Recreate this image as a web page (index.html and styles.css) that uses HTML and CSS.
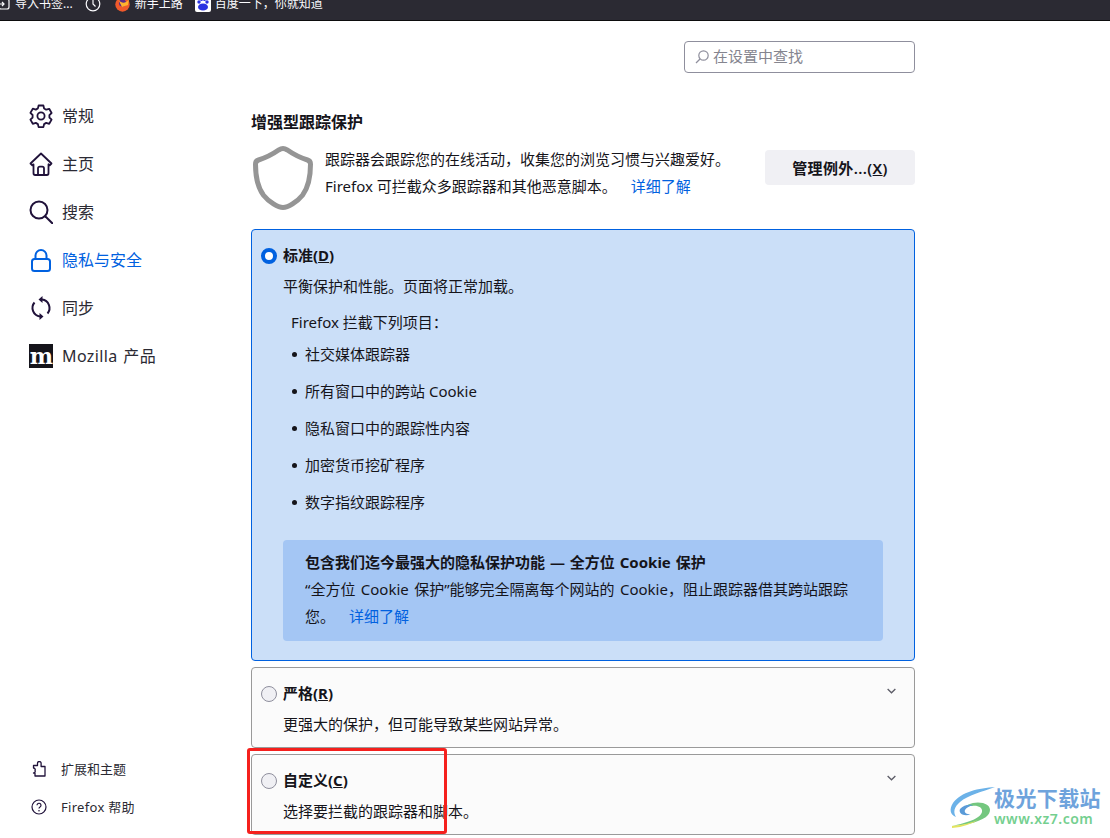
FILE: index.html
```html
<!DOCTYPE html>
<html lang="zh-CN">
<head>
    <meta charset="UTF-8">
    <meta name="viewport" content="width=device-width, initial-scale=1.0">
    <title>设置</title>
    <link rel="stylesheet" href="styles.css">
</head>
<body>
    <div class="bookmarks">
        <div class="bookmark-row">
            <span class="bookmark import">
                <svg width="12" height="12" viewBox="0 0 12 12" fill="none" stroke="#fbfbfe" stroke-width="1.2"><rect x="1" y="1" width="10" height="10" rx="2"/><path d="M0 6h6M4 4l2 2-2 2"/></svg>
                导入书签...
            </span>
            <span class="bookmark clock">
                <svg width="16" height="16" viewBox="0 0 16 16" fill="none" stroke="#fbfbfe" stroke-width="1.2"><circle cx="8" cy="8" r="6.8"/><path d="M8 3.5V8l2.5 2.5"/></svg>
            </span>
            <span class="bookmark guide">
                <svg width="15" height="15" viewBox="0 0 15 15"><circle cx="7.5" cy="7.5" r="7.2" fill="#f0592b"/><circle cx="7.5" cy="6" r="3.6" fill="#5b2a86"/><path d="M3 2c3 5 8 5 11 0l-1 6-6 2z" fill="#ffb22e"/></svg>
                新手上路
            </span>
            <span class="bookmark baidu">
                <svg width="16" height="16" viewBox="0 0 16 16"><rect width="16" height="16" rx="2" fill="#fff"/><circle cx="4" cy="6" r="1.7" fill="#2932e1"/><circle cx="12" cy="6" r="1.7" fill="#2932e1"/><circle cx="6.5" cy="3.5" r="1.5" fill="#2932e1"/><circle cx="9.5" cy="3.5" r="1.5" fill="#2932e1"/><ellipse cx="8" cy="11" rx="5" ry="3.6" fill="#2932e1"/></svg>
                百度一下，你就知道
            </span>
        </div>
    </div>

    <div class="page">
        <nav class="sidebar">
            <ul class="nav-list">
                <li class="nav-item">
                    <svg class="nav-icon" viewBox="0 0 24 24" fill="none" stroke="currentColor" stroke-width="1.8" stroke-linejoin="round"><path d="M9.6 1.5h4.8l.7 3 2.1 1.2 3-.9 2.4 4.2-2.2 2.1v2.4l2.2 2.1-2.4 4.2-3-.9-2.1 1.2-.7 3H9.6l-.7-3-2.1-1.2-3 .9-2.4-4.2 2.2-2.1V11L1.4 8.9l2.4-4.2 3 .9 2.1-1.2z"/><circle cx="12" cy="12" r="3.6"/></svg>
                    常规
                </li>
                <li class="nav-item">
                    <svg class="nav-icon" viewBox="0 0 24 24" fill="none" stroke="currentColor" stroke-width="1.8" stroke-linejoin="round"><path d="M1.5 11.5 12 1.5l10.5 10-1.8 1.8-1.2-1v9c0 .9-.6 1.7-1.6 1.7H6.1c-1 0-1.6-.8-1.6-1.7v-9l-1.2 1z"/><path d="M9 23v-6.500c0-1 .8-1.8 1.800-1.800h2.400c1 0 1.800.8 1.800 1.800V23"/></svg>
                    主页
                </li>
                <li class="nav-item">
                    <svg class="nav-icon" viewBox="0 0 24 24" fill="none" stroke="currentColor" stroke-width="2" stroke-linecap="round"><circle cx="10" cy="10" r="8.5"/><path d="m16.5 16.5 7 7"/></svg>
                    搜索
                </li>
                <li class="nav-item active">
                    <svg class="nav-icon" viewBox="0 0 24 24" fill="none" stroke="currentColor" stroke-width="2"><rect x="3" y="11" width="18" height="12" rx="2.5"/><path d="M6.5 11V7.5a5.500 5.500 0 0 1 11 0V11"/></svg>
                    隐私与安全
                </li>
                <li class="nav-item">
                    <svg class="nav-icon" viewBox="0 0 24 24" fill="none" stroke="currentColor" stroke-width="2"><path d="M13 3.600A8.500 8.500 0 0 1 18.500 17.500"/><path d="M11 20.400A8.500 8.500 0 0 1 5.500 6.500"/><path d="M13.500 0v7L9.500 3.500zM10.500 17v7l4-3.500z" fill="currentColor" stroke="none"/></svg>
                    同步
                </li>
                <li class="nav-item">
                    <span class="moz-logo">m</span>
                    <span class="moz-name">Mozilla 产品</span>
                </li>
            </ul>
            <ul class="nav-footer">
                <li class="foot-item">
                    <svg class="foot-icon" viewBox="0 0 16 16" fill="none" stroke="currentColor" stroke-width="1.3" stroke-linejoin="round"><path d="M2.500 4.500H6.500V2.300a1.800 1.800 0 0 1 3.600 0V5.500H14V15H4V12H2.500a1.700 1.700 0 0 0 1.500-2.500 1.700 1.700 0 0 0-1.500-2.500z"/></svg>
                    扩展和主题
                </li>
                <li class="foot-item">
                    <svg class="foot-icon" viewBox="0 0 16 16" fill="none" stroke="currentColor" stroke-width="1.2"><circle cx="8" cy="8" r="7"/><path d="M6 6.200a2 2 0 1 1 3 1.800c-.7.400-1 .8-1 1.600"/><circle cx="8" cy="11.800" r=".8" fill="currentColor" stroke="none"/></svg>
                    <span class="help-name">Firefox 帮助</span>
                </li>
            </ul>
        </nav>

        <main class="content">
            <div class="search-row">
                <div class="search-box">
                    <svg width="14" height="14" viewBox="0 0 14 14" fill="none" stroke="#8f8f9d" stroke-width="1.2"><circle cx="8.5" cy="5.500" r="4.700"/><path d="M5 9 1 13"/></svg>
                    <span class="search-hint">在设置中查找</span>
                </div>
            </div>

            <h2 class="section-title">增强型跟踪保护</h2>
            <div class="intro">
                <svg class="shield" width="66" height="66" viewBox="0 0 66 66" fill="none" stroke="#959595" stroke-width="5" stroke-linejoin="round"><path d="M32 3.500c1.500 0 2.800.5 4 1.300C42 9 50 13 56.500 15c2 .6 3 2.200 3 4.200 0 13-2 23-8 31C46 57 37 62.500 32 62.500S18 57 12.500 50.200C6.500 42.200 4.500 32.200 4.500 19.200c0-2 1-3.600 3-4.200C14 13 22 9 28 4.800c1.200-.8 2.500-1.300 4-1.300z"/></svg>
                <div class="intro-text">
                    <p>跟踪器会跟踪您的在线活动，收集您的浏览习惯与兴趣爱好。</p>
                    <p>Firefox 可拦截众多跟踪器和其他恶意脚本。<a class="link learn" href="#">详细了解</a></p>
                </div>
                <button class="manage-btn" type="button">管理例外...(<u>X</u>)</button>
            </div>

            <section class="card selected">
                <div class="card-head">
                    <span class="radio on"></span>
                    <span class="card-title">标准(<u>D</u>)</span>
                </div>
                <p class="card-desc">平衡保护和性能。页面将正常加载。</p>
                <p class="block-title">Firefox 拦截下列项目：</p>
                <ul class="block-list">
                    <li>社交媒体跟踪器</li>
                    <li>所有窗口中的跨站 Cookie</li>
                    <li>隐私窗口中的跟踪性内容</li>
                    <li>加密货币挖矿程序</li>
                    <li>数字指纹跟踪程序</li>
                </ul>
                <div class="callout">
                    <p class="callout-title">包含我们迄今最强大的隐私保护功能 — 全方位 Cookie 保护</p>
                    <p class="callout-text">“全方位 Cookie 保护”能够完全隔离每个网站的 Cookie，阻止跟踪器借其跨站跟踪您。<a class="link learn" href="#">详细了解</a></p>
                </div>
            </section>

            <section class="card">
                <div class="card-head">
                    <span class="radio"></span>
                    <span class="card-title">严格(<u>R</u>)</span>
                    <svg class="chevron" width="9" height="6" viewBox="0 0 10 6" fill="none" stroke="#5b5b66" stroke-width="1.4"><path d="m.7.7 4.300 4.300L9.300.7"/></svg>
                </div>
                <p class="card-desc">更强大的保护，但可能导致某些网站异常。</p>
            </section>

            <section class="card">
                <div class="card-head">
                    <span class="radio"></span>
                    <span class="card-title">自定义(<u>C</u>)</span>
                    <svg class="chevron" width="9" height="6" viewBox="0 0 10 6" fill="none" stroke="#5b5b66" stroke-width="1.4"><path d="m.7.7 4.300 4.300L9.300.7"/></svg>
                </div>
                <p class="card-desc">选择要拦截的跟踪器和脚本。</p>
            </section>
        </main>
    </div>

    <div class="red-box"></div>

    <div class="watermark">
        <svg width="46" height="42" viewBox="0 0 46 42" fill="none">
            <path d="M46 1C30 2 12 6 4 17c-4 6-3 12 3 14-3-5-2-10 4-15C19 9 33 6 46 1z" fill="#6cb2e8"/>
            <path d="M14 24c2-6 12-9 20-7 7 2 9 7 5 12-5 6-20 10-36 11 14-3 28-7 30-14 1-5-5-7-10-6-5 0-8 2-9 4z" fill="#74c77f"/>
            <path d="M3 40c10-1 20-3 27-7-7 5-16 8-27 9z" fill="#e4e45f"/>
            <path d="M11 23c3-4 9-5 13-4-4 1-7 3-8 5s1 5 6 4c-6 3-13 0-11-5z" fill="#5a9bd8"/>
        </svg>
        <div class="watermark-text">
            <span class="wm-name">极光下载站</span>
            <span class="wm-url">www.xz7.com</span>
        </div>
    </div>
</body>
</html>
```

FILE: styles.css
```css
* {
    box-sizing: border-box;
}
html, body {
    height: 838px;
    overflow: hidden;
}
body {
    margin: 0;
    background: #fff;
    color: #15141a;
    font-family: "Noto Sans", "Noto Sans CJK SC", sans-serif;
    font-size: 15px;
    line-height: 27px;
}
p, ul, h2 {
    margin: 0;
    padding: 0;
}
ul {
    list-style: none;
}

/* bookmarks bar, cut off by the screenshot */
.bookmarks {
    height: 21px;
    background: #2b2a33;
    border-bottom: 1px solid #0c0c0d;
    overflow: hidden;
}
.bookmark-row {
    display: flex;
    align-items: center;
    height: 18px;
    margin-top: -5px;
    margin-left: -2px;
    color: #fbfbfe;
    font-size: 12px;
    line-height: 18px;
}
.bookmark {
    display: flex;
    align-items: center;
    gap: 5px;
    white-space: nowrap;
}
.clock {
    margin-left: 12px;
}
.guide {
    margin-left: 14px;
}
.baidu {
    margin-left: 12px;
    gap: 4px;
}

.page {
    display: flex;
    height: 817px;
}

/* left navigation */
.sidebar {
    display: flex;
    flex-direction: column;
    justify-content: space-between;
    width: 251px;
    padding: 71px 0 12px 29px;
    flex-shrink: 0;
}
.nav-item {
    display: flex;
    align-items: center;
    gap: 9px;
    height: 48px;
    font-size: 16px;
    color: #2b2a33;
}
.nav-item.active {
    color: #0061e0;
}
.nav-icon {
    width: 24px;
    height: 24px;
    color: #20123a;
    flex-shrink: 0;
}
.active .nav-icon {
    color: #0061e0;
}
.moz-logo {
    display: flex;
    justify-content: center;
    align-items: center;
    width: 24px;
    height: 24px;
    background: #15141a;
    color: #fff;
    font-family: "DejaVu Serif", serif;
    font-size: 22px;
    font-weight: 700;
    line-height: 24px;
    letter-spacing: -1px;
}
.moz-name {
    letter-spacing: .4px;
    word-spacing: 1px;
}
.foot-item {
    display: flex;
    align-items: center;
    gap: 14px;
    height: 38px;
    padding-left: 2px;
    font-size: 13px;
    color: #2b2a33;
}
.foot-icon {
    width: 16px;
    height: 16px;
    color: #20123a;
}
.help-name {
    letter-spacing: .3px;
}

/* right column */
.content {
    width: 664px;
}
.search-row {
    display: flex;
    justify-content: flex-end;
    padding-top: 20px;
}
.search-box {
    display: flex;
    align-items: center;
    gap: 4px;
    width: 231px;
    height: 32px;
    padding-left: 10px;
    background: #fff;
    border: 1px solid #8f8f9d;
    border-radius: 4px;
    color: #85858f;
    font-size: 15px;
}
.search-hint {
    margin-top: -2px;
}
.section-title {
    margin-top: 36px;
    font-size: 16px;
    font-weight: 700;
    line-height: 27px;
    color: #15141a;
}
.intro {
    display: flex;
    align-items: flex-start;
    margin-top: 9px;
    height: 84px;
}
.shield {
    flex-shrink: 0;
}
.intro-text {
    flex: 1;
    margin-left: 8px;
    padding-top: 1px;
    white-space: nowrap;
}
.link {
    color: #0061e0;
    text-decoration: none;
}
.learn {
    margin-left: 14px;
}
.manage-btn {
    width: 150px;
    height: 35px;
    margin-top: 5px;
    padding: 0;
    background: #f0f0f4;
    border: 0;
    border-radius: 4px;
    color: #15141a;
    font-family: inherit;
    font-size: 15px;
    font-weight: 600;
    letter-spacing: .4px;
}

/* protection level cards */
.card {
    height: 81px;
    margin-bottom: 6px;
    padding: 0 9px;
    background: #fbfbfb;
    border: 1px solid #9a9a9a;
    border-radius: 4px;
}
.card.selected {
    height: 432px;
    background: #cbdff8;
    border-color: #0061e0;
}
.card-head {
    display: flex;
    align-items: center;
    gap: 6px;
    height: 27px;
    margin-top: 12px;
}
.radio {
    width: 16px;
    height: 16px;
    background: #f0f0f4;
    border: 1px solid #8f8f9d;
    border-radius: 50%;
    flex-shrink: 0;
}
.radio.on {
    background: #fff;
    border: 4px solid #0061e0;
}
.card-title {
    font-weight: 700;
}
.chevron {
    margin-left: auto;
    margin-right: 9px;
    margin-top: -6px;
}
.card-desc {
    margin-top: 4px;
    margin-left: 22px;
}
.block-title {
    margin-top: 9px;
    margin-left: 30px;
}
.block-list {
    margin-left: 31px;
}
.block-list li {
    display: flex;
    align-items: center;
    gap: 8px;
    height: 37px;
}
.block-list li::before {
    content: "";
    width: 5px;
    height: 5px;
    background: #15141a;
    border-radius: 50%;
}
.callout {
    margin: 19px 22px 0;
    height: 101px;
    width: 600px;
    padding: 9px 22px;
    background: #a4c6f4;
    border-radius: 4px;
}
.callout-title {
    font-weight: 700;
    word-spacing: 1px;
}
.callout-text {
    word-spacing: 1.5px;
}

/* things lying over the page */
.red-box {
    position: absolute;
    left: 247px;
    top: 748px;
    width: 200px;
    height: 86px;
    border: 3px solid #f5201d;
    border-radius: 3px;
}
.watermark {
    position: absolute;
    right: 9px;
    top: 786px;
    display: flex;
    align-items: center;
}
.watermark-text {
    display: flex;
    flex-direction: column;
    margin-left: -1px;
}
.wm-name {
    color: #6ea3dc;
    font-size: 21px;
    font-weight: 700;
    line-height: 24px;
    letter-spacing: .4px;
}
.wm-url {
    color: #74cf8f;
    font-size: 14px;
    font-weight: 600;
    line-height: 18px;
    letter-spacing: .5px;
}
```
